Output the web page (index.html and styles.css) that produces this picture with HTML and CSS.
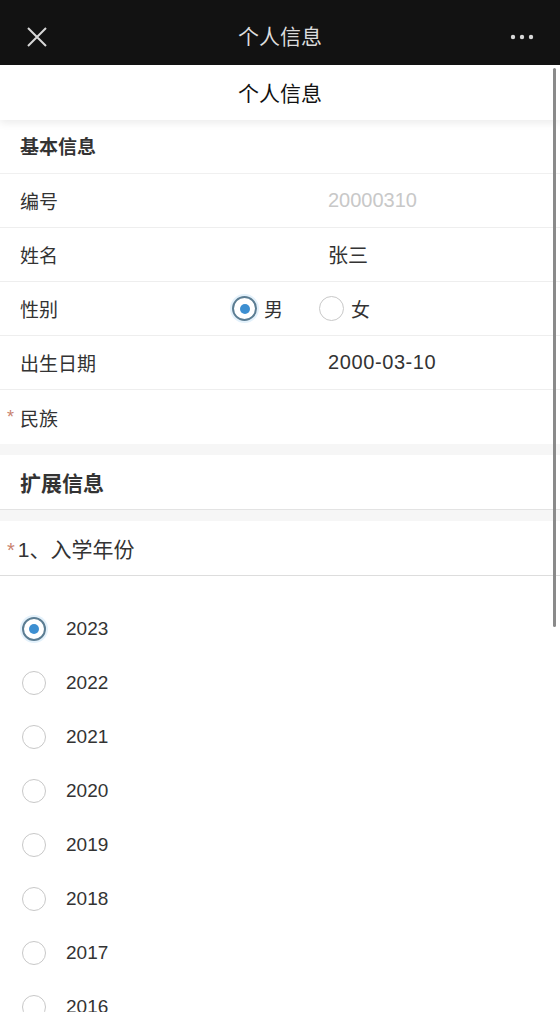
FILE: index.html
```html
<!DOCTYPE html>
<html lang="zh">
<head>
<meta charset="utf-8">
<link rel="stylesheet" href="styles.css">
</head>
<body>
<div class="topbar">
  <svg class="close" width="22" height="22" viewBox="0 0 22 22"><path d="M2 2L20 20M20 2L2 20" stroke="#d8d8d8" stroke-width="2" fill="none"/></svg>
  <div class="toptitle">个人信息</div>
  <svg class="more" width="24" height="6" viewBox="0 0 24 6"><circle cx="3" cy="3" r="2.2" fill="#d8d8d8"/><circle cx="12" cy="3" r="2.2" fill="#d8d8d8"/><circle cx="21" cy="3" r="2.2" fill="#d8d8d8"/></svg>
</div>
<div class="page">
  <div class="header">个人信息</div>
  <div class="section-title">基本信息</div>
  <div class="row"><span class="label">编号</span><span class="value muted">20000310</span></div>
  <div class="row"><span class="label">姓名</span><span class="value">张三</span></div>
  <div class="row"><span class="label">性别</span>
    <span class="choices">
      <span class="choice"><span class="radio on"></span>男</span>
      <span class="choice"><span class="radio"></span>女</span>
    </span>
  </div>
  <div class="row"><span class="label">出生日期</span><span class="value date">2000-03-10</span></div>
  <div class="row req last"><span class="star">*</span><span class="label">民族</span></div>
  <div class="gap"></div>
  <div class="section-title big">扩展信息</div>
  <div class="gap"></div>
  <div class="question"><span class="star">*</span>1、入学年份</div>
  <div class="options">
    <div class="option"><span class="radio on"></span>2023</div>
    <div class="option"><span class="radio"></span>2022</div>
    <div class="option"><span class="radio"></span>2021</div>
    <div class="option"><span class="radio"></span>2020</div>
    <div class="option"><span class="radio"></span>2019</div>
    <div class="option"><span class="radio"></span>2018</div>
    <div class="option"><span class="radio"></span>2017</div>
    <div class="option"><span class="radio"></span>2016</div>
  </div>
  <div class="scrollbar"></div>
</div>
</body>
</html>
```
FILE: styles.css
```css
html, body {
  margin: 0;
  padding: 0;
  background: #fff;
  height: 1012px;
  overflow: hidden;
  font-family: "Liberation Sans", "Noto Sans CJK SC", sans-serif;
  color: #333;
}
.topbar {
  height: 65px;
  background: #121212;
  display: flex;
  align-items: center;
  justify-content: space-between;
  padding: 9px 26px 0 26px;
  box-sizing: border-box;
  position: relative;
}
.toptitle {
  position: absolute;
  left: 0;
  right: 0;
  top: 9px;
  text-align: center;
  color: #dcdcdc;
  font-size: 21px;
  line-height: 56px;
  pointer-events: none;
}
.page {
  position: relative;
  height: 947px;
  overflow: hidden;
}
.header {
  height: 55px;
  line-height: 57px;
  text-align: center;
  font-size: 21px;
  color: #111;
  background: #fff;
  box-shadow: 0 3px 8px rgba(0,0,0,0.08);
  position: relative;
  z-index: 1;
}
.section-title {
  height: 53px;
  line-height: 55px;
  padding-left: 20px;
  font-size: 19px;
  font-weight: bold;
  color: #333;
  border-bottom: 1px solid #f0f0f0;
}
.section-title.big {
  height: 54px;
  line-height: 58px;
  font-size: 21px;
  border-bottom: 1px solid #e3e3e3;
}
.row {
  height: 54px;
  box-sizing: border-box;
  border-bottom: 1px solid #eeeeee;
  display: grid;
  grid-template-columns: 212px 96px 1fr;
  align-items: center;
  padding-left: 20px;
  font-size: 19px;
}
.row.last { border-bottom: none; }
.row .value { grid-column: 3; font-size: 20px; }
.row .date { letter-spacing: 0.6px; }
.row .muted { color: #c8c8c8; }
.row.req { padding-left: 7px; grid-template-columns: 13px 1fr; }
.star { color: #c9836f; font-size: 18px; }
.choices {
  grid-column: 2 / 4;
  display: flex;
  align-items: center;
  gap: 36px;
}
.choice { display: flex; align-items: center; gap: 7px; }
.choice .radio { width: 25px; height: 25px; }
.radio {
  width: 22px;
  height: 22px;
  border-radius: 50%;
  border: 1.5px solid #c8c8c8;
  box-sizing: border-box;
  display: inline-block;
  position: relative;
  flex: none;
}
.radio.on {
  border: 2px solid #5b7d93;
  box-shadow: 0 0 0 2px #e3f1fb;
}
.radio.on::after {
  content: "";
  position: absolute;
  left: 50%;
  top: 50%;
  width: 10px;
  height: 10px;
  margin: -5px 0 0 -5px;
  border-radius: 50%;
  background: #3d8fd1;
}
.gap {
  height: 11px;
  background: #f6f6f6;
}
.question {
  height: 54px;
  line-height: 57px;
  padding-left: 7px;
  font-size: 21px;
  color: #333;
  border-bottom: 1px solid #dddddd;
}
.question .star { font-size: 20px; margin-right: 3px; }
.options { padding-top: 26px; }
.option {
  height: 54px;
  display: flex;
  align-items: center;
  padding-left: 22px;
  gap: 20px;
  font-size: 19px;
  color: #333;
}
.option .radio { width: 24px; height: 24px; }
.scrollbar {
  position: absolute;
  right: 4px;
  top: 3px;
  width: 3px;
  height: 559px;
  background: #8a8a8a;
  border-radius: 2px;
  z-index: 2;
}
```
